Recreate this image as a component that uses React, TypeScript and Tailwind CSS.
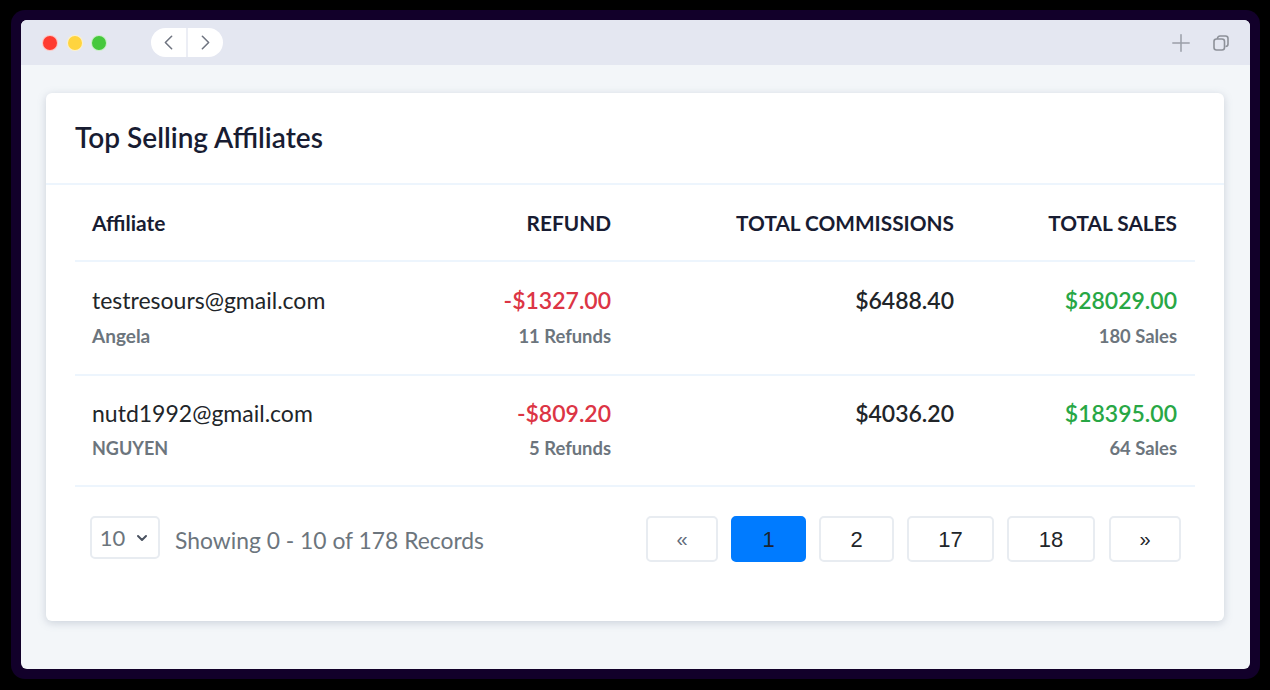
import React from "react";
import { ChevronLeft, ChevronRight, ChevronDown, Plus } from "lucide-react";

const rows = [
  { email: "testresours@gmail.com", name: "Angela", nameCls: "text-[19px]", refund: "-$1327.00", refunds: "11 Refunds", commissions: "$6488.40", sales: "$28029.00", salesCount: "180 Sales", wrap: "h-[114px] pt-[23px]", sub: "mt-[9px]" },
  { email: "nutd1992@gmail.com", name: "NGUYEN", nameCls: "text-[18px]", refund: "-$809.20", refunds: "5 Refunds", commissions: "$4036.20", sales: "$18395.00", salesCount: "64 Sales", wrap: "h-[111px] pt-[22px]", sub: "mt-[8px]" },
];

const pages = [
  { label: "«", w: "w-[72px] text-[20px]", cls: "border-[#e8ecf1] text-[#5f6b7a]" },
  { label: "1", w: "w-[75px]", cls: "bg-[#007bff] border-[#007bff] text-[#1c2530]" },
  { label: "2", w: "w-[75px]", cls: "border-[#e8ecf1] text-[#212529]" },
  { label: "17", w: "w-[87px]", cls: "border-[#e8ecf1] text-[#212529]" },
  { label: "18", w: "w-[88px]", cls: "border-[#e8ecf1] text-[#212529]" },
  { label: "»", w: "w-[72px] ml-[1px] text-[20px]", cls: "border-[#e8ecf1] text-[#212529]" },
];

export default function App() {
  return (
    <div className="w-[1270px] h-[690px] bg-black pt-[10px] pl-[11px] font-['Lato',sans-serif]">
      <div className="w-[1249px] h-[669px] bg-[#12002a] rounded-[14px] p-[10px]">
        <div className="h-[649px] rounded-[6px] bg-[#f3f6f9] overflow-hidden">
          {/* browser chrome */}
          <div className="h-[45px] bg-[#e4e7f1] flex items-center pl-[21px] pr-[20px]">
            <div className="flex gap-[8.5px]">
              <span className="w-[16px] h-[16px] rounded-full bg-[#ff3b30] border border-white/70" />
              <span className="w-[16px] h-[16px] rounded-full bg-[#ffd43f] border border-white/70" />
              <span className="w-[16px] h-[16px] rounded-full bg-[#46c83d] border border-white/70" />
            </div>
            <div className="ml-[44px] flex h-[29px] w-[72px] rounded-full bg-white overflow-hidden">
              <div className="flex-1 flex items-center justify-center border-r-2 border-[#eceef5]">
                <ChevronLeft size={25} strokeWidth={1.5} className="text-[#6f7480]" />
              </div>
              <div className="flex-1 flex items-center justify-center">
                <ChevronRight size={25} strokeWidth={1.5} className="text-[#6f7480]" />
              </div>
            </div>
            <div className="ml-auto flex items-center gap-[17px] text-[#9a9fa8]">
              <Plus size={28} strokeWidth={1.3} />
              <svg width="18" height="18" viewBox="0 0 18 18" fill="none" stroke="#8d9199" strokeWidth="1.6">
                <rect x="2" y="5" width="10.5" height="11" rx="2.5" />
                <path d="M5.5 5V4.5A2.5 2.5 0 0 1 8 2h5.5A2.5 2.5 0 0 1 16 4.5V10a2.5 2.5 0 0 1-2.5 2.5" />
              </svg>
            </div>
          </div>

          {/* card */}
          <div className="mx-[25px] mt-[28px] h-[528px] w-[1178px] bg-white rounded-[6px] shadow-[0_2px_8px_rgba(100,116,139,0.28)]">
            <div className="h-[92px] border-b-2 border-[#edf5fd] pl-[29px] pb-[3px] flex items-center">
              <h1 className="text-[28px] font-semibold text-[#181c32]">Top Selling Affiliates</h1>
            </div>
            <div className="px-[29px]">
              <div className="h-[77px] border-b-2 border-[#edf5fd] flex items-center text-[20.8px] font-bold text-[#181c32]">
                <div className="w-[17px]" />
                <div className="w-[319px] text-[21px]">Affiliate</div>
                <div className="w-[200px] text-right">REFUND</div>
                <div className="w-[343px] text-right">TOTAL COMMISSIONS</div>
                <div className="w-[223px] text-right">TOTAL SALES</div>
              </div>
              {rows.map((r) => (
                <div key={r.email} className={`${r.wrap} border-b-2 border-[#edf5fd] flex pl-[17px]`}>
                  <div className="w-[319px]">
                    <div className="text-[23px] leading-[30px] text-[#212529]">{r.email}</div>
                    <div className={`${r.sub} ${r.nameCls} leading-[24px] font-bold text-[#6c757d]`}>{r.name}</div>
                  </div>
                  <div className="w-[200px] text-right">
                    <div className="text-[23px] leading-[30px] font-semibold text-[#dc3545]">{r.refund}</div>
                    <div className={`${r.sub} text-[18.4px] leading-[24px] font-bold text-[#6c757d]`}>{r.refunds}</div>
                  </div>
                  <div className="w-[343px] text-right text-[23px] leading-[30px] font-semibold text-[#212529]">{r.commissions}</div>
                  <div className="w-[223px] text-right">
                    <div className="text-[23px] leading-[30px] font-semibold text-[#28a745]">{r.sales}</div>
                    <div className={`${r.sub} text-[18.4px] leading-[24px] font-bold text-[#6c757d]`}>{r.salesCount}</div>
                  </div>
                </div>
              ))}
              {/* pagination */}
              <div className="flex items-start pt-[29px] pl-[15px]">
                <div className="w-[70px] h-[43px] rounded-[5px] border-2 border-[#e8ecf1] flex items-center justify-center gap-[9px] text-[22px] text-[#6c757d]">
                  10
                  <ChevronDown size={16} strokeWidth={3} className="text-[#4a5260]" />
                </div>
                <span className="ml-[15px] leading-[48px] text-[22.85px] text-[#6c757d]">Showing 0 - 10 of 178 Records</span>
                <div className="ml-auto mr-[14px] flex gap-[13px] font-['Liberation_Sans',sans-serif] text-[22px]">
                  {pages.map((p) => (
                    <div key={p.label} className={`${p.w} h-[46px] rounded-[5px] border-2 flex items-center justify-center ${p.cls}`}>
                      {p.label}
                    </div>
                  ))}
                </div>
              </div>
            </div>
          </div>
        </div>
      </div>
    </div>
  );
}
